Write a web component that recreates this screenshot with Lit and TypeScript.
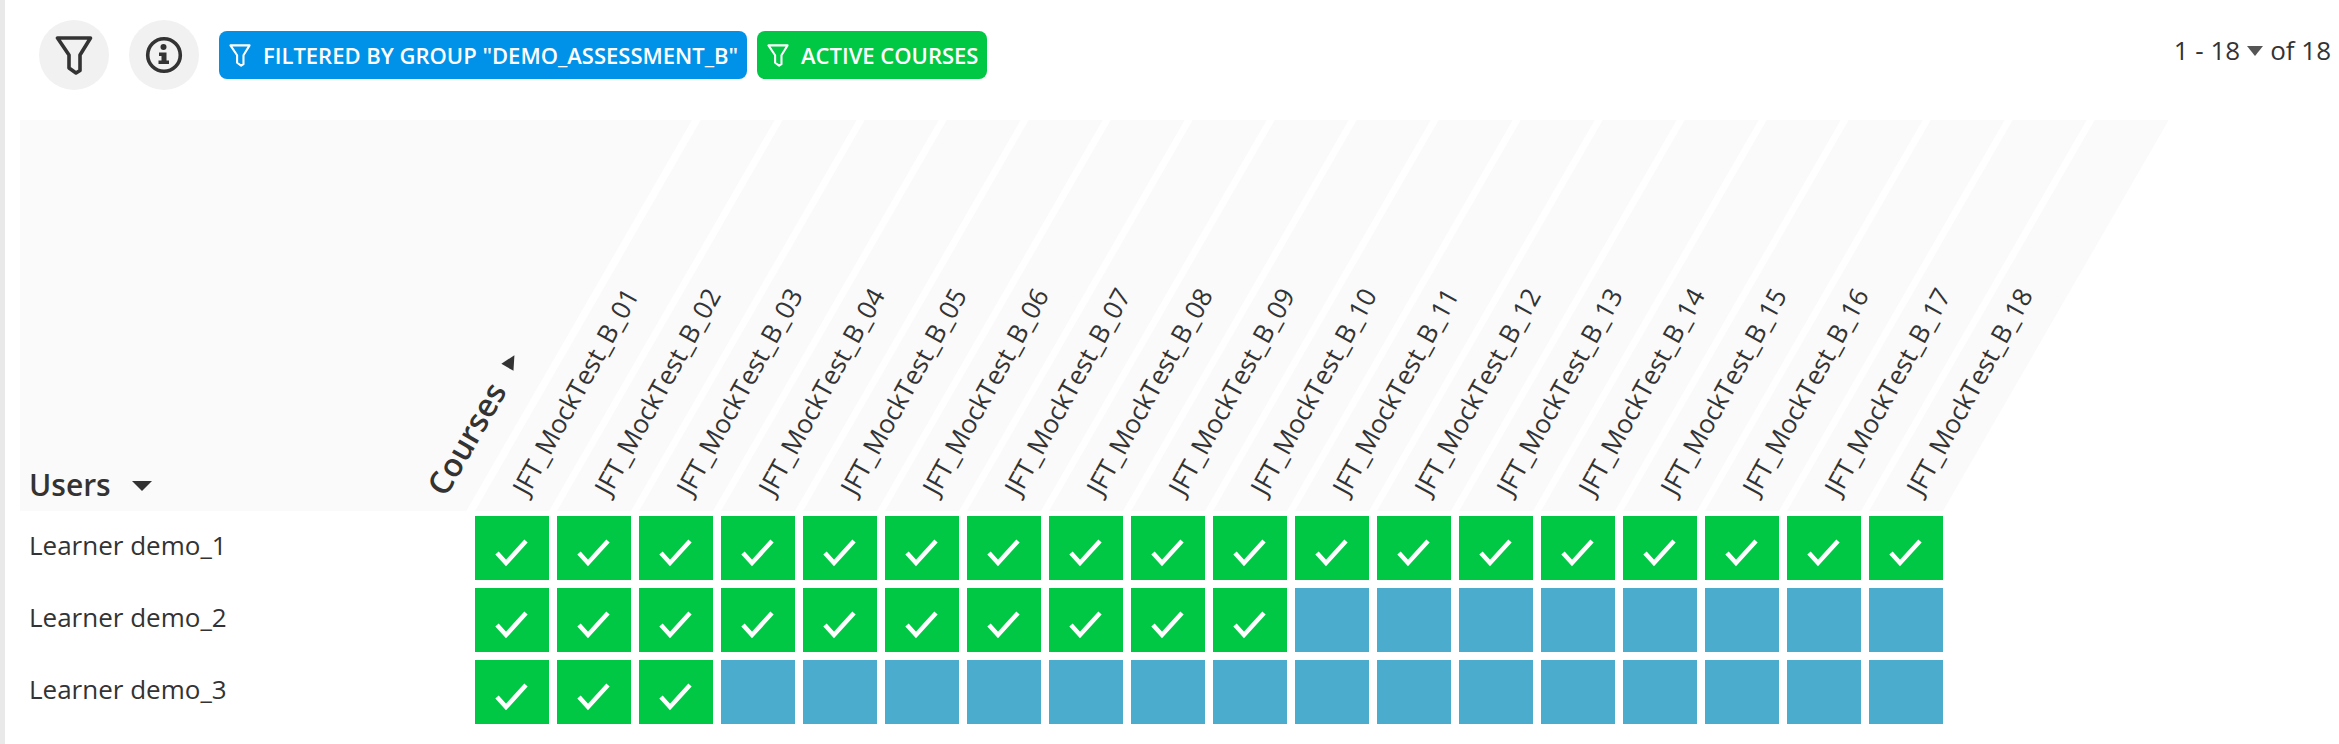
import { LitElement, html, css, svg } from "lit";
import { customElement } from "lit/decorators.js";

const COLS = Array.from({ length: 18 }, (_, i) => `JFT_MockTest_B_${String(i + 1).padStart(2, "0")}`);
const ROWS = [
  { name: "Learner demo_1", done: 18 },
  { name: "Learner demo_2", done: 10 },
  { name: "Learner demo_3", done: 3 },
];

const funnelPath = (stroke: string, w: number) =>
  svg`<path d="M2.5 2H35.5L25 19V34.5L21 37L14 32V19Z" fill="none" stroke="${stroke}" stroke-width="${w}" stroke-linejoin="round"/>`;

@customElement("app-root")
export class AppRoot extends LitElement {
  static styles = css`
    :host {
      display: block;
      width: 2339px;
      height: 744px;
      overflow: hidden;
      background: #fff;
      font-family: "Open Sans", "Noto Sans", sans-serif;
      color: #333;
      box-sizing: border-box;
      border-left: 5px solid #e9e9e9;
    }
    .top {
      display: flex;
      align-items: center;
      height: 70px;
      padding: 20px 0 0 34px;
      gap: 20px;
    }
    .circle {
      width: 70px;
      height: 70px;
      border-radius: 50%;
      background: #f1f1f1;
      display: flex;
      align-items: center;
      justify-content: center;
      flex: none;
    }
    .circle svg { display: block; color: #333; }
    .chips { display: flex; gap: 10px; }
    .chip {
      height: 48px;
      border-radius: 8px;
      color: #fff;
      font-size: 22px;
      font-weight: 600;
      display: flex;
      align-items: center;
      gap: 12px;
      padding: 0 8px 0 10px;
      white-space: nowrap;
      box-sizing: border-box;
    }
    .chip svg { display: block; flex: none; }
    .blue { background: #0092e8; width: 528px; }
    .green { background: #00c845; width: 230px; }
    .pager {
      margin-left: auto;
      margin-right: 8px;
      margin-top: -10px;
      font-size: 26px;
      display: flex;
      align-items: center;
      gap: 7px;
      color: #333;
    }
    .down {
      width: 0;
      height: 0;
      border-left: 8px solid transparent;
      border-right: 8px solid transparent;
      border-top: 10px solid #555;
      margin-top: 2px;
    }
    .head {
      position: relative;
      margin: 30px 0 0 15px;
      height: 391px;
      display: flex;
    }
    .corner {
      flex: none;
      width: 447px;
      margin-right: 8px;
      position: relative;
      display: flex;
      align-items: flex-end;
      padding: 0 0 8px 9px;
      box-sizing: border-box;
    }
    .corner::before {
      content: "";
      position: absolute;
      inset: 0 -225px 0 0;
      background: #fafafa;
      clip-path: polygon(0 0, 100% 0, calc(100% - 225.7px) 100%, 0 100%);
    }
    .users {
      position: relative;
      font-size: 30px;
      font-weight: 600;
      line-height: 36px;
      display: flex;
      align-items: center;
      gap: 21px;
    }
    .users i {
      width: 0;
      height: 0;
      border-left: 10px solid transparent;
      border-right: 10px solid transparent;
      border-top: 10px solid #333;
      margin-top: 2px;
    }
    .courses {
      position: absolute;
      left: 431px;
      bottom: 10px;
      font-size: 32px;
      font-weight: 600;
      line-height: 36px;
      white-space: nowrap;
      transform-origin: 0 100%;
      transform: rotate(-60deg);
      display: flex;
      align-items: center;
      gap: 20px;
    }
    .courses i {
      width: 0;
      height: 0;
      border-top: 7px solid transparent;
      border-bottom: 7px solid transparent;
      border-left: 14px solid #333;
    }
    .cols { display: flex; gap: 8px; }
    .col {
      width: 74px;
      height: 391px;
      position: relative;
      flex: none;
    }
    .col::before {
      content: "";
      position: absolute;
      inset: 0;
      background: #fafafa;
      transform-origin: 0 100%;
      transform: skewX(-30deg);
    }
    .label {
      position: absolute;
      left: 58px;
      bottom: 11px;
      font-size: 26px;
      line-height: 32px;
      white-space: nowrap;
      transform-origin: 0 100%;
      transform: rotate(-61deg);
      color: #333;
    }
    .body {
      margin: 5px 0 0 15px;
      display: flex;
      flex-direction: column;
      gap: 8px;
    }
    .row { display: flex; height: 64px; }
    .name {
      flex: none;
      width: 455px;
      padding-left: 9px;
      box-sizing: border-box;
      font-size: 26px;
      line-height: 58px;
      color: #333;
    }
    .cells { display: flex; gap: 8px; }
    .cell { width: 74px; height: 64px; background: #4bacce; }
    .cell.on { background: #00c845; }
    .cell svg { display: block; }
  `;

  render() {
    return html`
      <div class="top">
        <div class="circle">
          <svg width="38" height="39" viewBox="0 0 38 39">${funnelPath("currentColor", 3.6)}</svg>
        </div>
        <div class="circle">
          <svg width="38" height="38" viewBox="0 0 38 38">
            <circle cx="19" cy="19" r="16.3" fill="none" stroke="currentColor" stroke-width="3.6"/>
            <circle cx="18.5" cy="11" r="3" fill="currentColor"/>
            <path d="M14 16.5H21.5V24.5H24V28H13.5V24.5H16.5V20H14Z" fill="currentColor"/>
          </svg>
        </div>
        <div class="chips">
          <div class="chip blue">
            <svg width="22" height="23" viewBox="0 0 38 39">${funnelPath("#fff", 3.6)}</svg>
            FILTERED BY GROUP "DEMO_ASSESSMENT_B"
          </div>
          <div class="chip green">
            <svg width="22" height="23" viewBox="0 0 38 39">${funnelPath("#fff", 3.6)}</svg>
            ACTIVE COURSES
          </div>
        </div>
        <div class="pager">1 - 18 <span class="down"></span> of 18</div>
      </div>
      <div class="head">
        <div class="corner">
          <div class="users">Users <i></i></div>
          <div class="courses">Courses <i></i></div>
        </div>
        <div class="cols">
          ${COLS.map((c) => html`<div class="col"><div class="label">${c}</div></div>`)}
        </div>
      </div>
      <div class="body">
        ${ROWS.map(
          (r) => html`
            <div class="row">
              <div class="name">${r.name}</div>
              <div class="cells">
                ${COLS.map((_, i) =>
                  i < r.done
                    ? html`<div class="cell on">
                        <svg width="74" height="64" viewBox="0 0 74 64">
                          <path d="M22 37L31 47L51 25" fill="none" stroke="#fff" stroke-width="4.5"/>
                        </svg>
                      </div>`
                    : html`<div class="cell"></div>`
                )}
              </div>
            </div>
          `
        )}
      </div>
    `;
  }
}
